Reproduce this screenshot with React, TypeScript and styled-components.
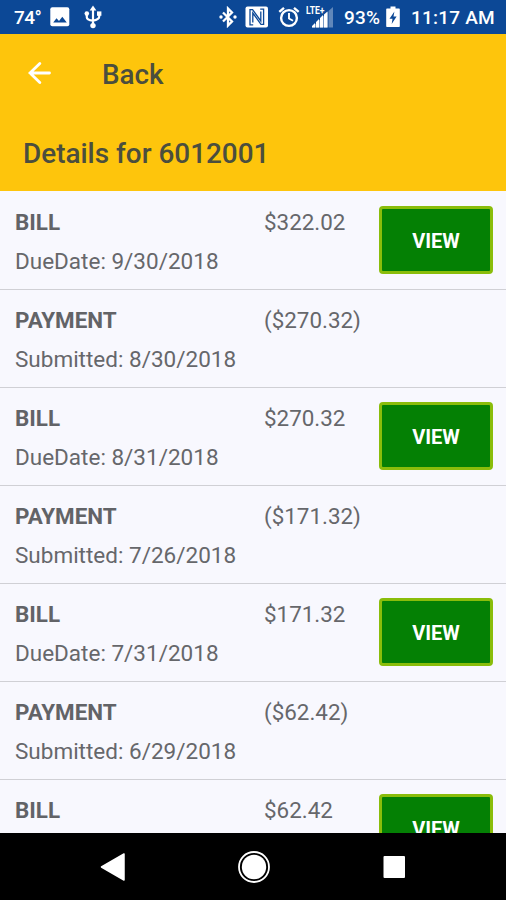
import React from "react";
import styled, { createGlobalStyle } from "styled-components";

const GlobalStyle = createGlobalStyle`
  * { box-sizing: border-box; }
  body { margin: 0; font-family: Roboto, "Noto Sans", sans-serif; }
`;

const Screen = styled.div`
  width: 506px;
  height: 900px;
  display: flex;
  flex-direction: column;
  overflow: hidden;
  background: #f8f8fe;
`;

const StatusBar = styled.div`
  flex: none;
  height: 34px;
  padding: 0 11px 0 14px;
  display: flex;
  align-items: center;
  justify-content: space-between;
  background: #0c4896;
  color: #fff;
`;

const StatusGroup = styled.div`
  display: flex;
  align-items: center;
  height: 34px;
`;

const StatusText = styled.span<{ $w: number; $gap?: number; $spacing?: number }>`
  width: ${(p) => p.$w}px;
  margin-left: ${(p) => p.$gap ?? 0}px;
  padding-top: 2px;
  font-size: 19px;
  line-height: 22px;
  font-weight: 500;
  letter-spacing: ${(p) => p.$spacing ?? 0}px;
  white-space: nowrap;
`;

const StatusIcon = styled.svg<{ $gap: number }>`
  display: block;
  flex: none;
  margin-left: ${(p) => p.$gap}px;
`;

const Header = styled.header`
  flex: none;
  height: 157px;
  background: #fec50c;
  color: #4b4e3e;
`;

const NavRow = styled.div`
  height: 80px;
  padding-left: 28px;
  display: flex;
  align-items: center;
`;

const BackArrow = styled.svg`
  display: block;
  margin-top: -2px;
`;

const BackLabel = styled.span`
  margin-left: 51px;
  padding-top: 2px;
  font-size: 27.8px;
  line-height: 34px;
  font-weight: 500;
`;

const Title = styled.h1`
  margin: 0;
  padding: 23px 0 0 23px;
  font-size: 27.9px;
  line-height: 34px;
  font-weight: 500;
  white-space: nowrap;
`;

const List = styled.main`
  flex: none;
  height: 642px;
  overflow: hidden;
  padding-top: 1px;
`;

const Row = styled.section`
  height: 98px;
  padding: 11px 13px 0 15px;
  display: grid;
  grid-template-columns: 249px 115px 1fr;
  border-bottom: 1px solid #d0d0d5;
  color: #66676b;
`;

const Kind = styled.div`
  font-size: 22.4px;
  line-height: 39px;
  font-weight: 700;
  color: #626367;
`;

const Detail = styled.div`
  font-size: 22.5px;
  line-height: 39px;
  white-space: nowrap;
`;

const Amount = styled.div`
  font-size: 22.4px;
  line-height: 39px;
`;

const ViewButton = styled.button`
  height: 68px;
  margin: 3px 0 0;
  padding: 2px 0 0;
  border: 3px solid #8abd0b;
  border-radius: 4px;
  background: #048004;
  color: #fff;
  font: 700 20px/24px Roboto, sans-serif;
`;

const NavBar = styled.nav`
  flex: none;
  height: 67px;
  background: #000;
  display: flex;
  align-items: center;
  padding-left: 100px;
`;

const NavIcon = styled.svg<{ $gap?: number }>`
  display: block;
  margin-left: ${(p) => p.$gap ?? 0}px;
`;

type Entry = { kind: "BILL" | "PAYMENT"; date?: string; amount: string };

const entries: Entry[] = [
  { kind: "BILL", date: "9/30/2018", amount: "$322.02" },
  { kind: "PAYMENT", date: "8/30/2018", amount: "($270.32)" },
  { kind: "BILL", date: "8/31/2018", amount: "$270.32" },
  { kind: "PAYMENT", date: "7/26/2018", amount: "($171.32)" },
  { kind: "BILL", date: "7/31/2018", amount: "$171.32" },
  { kind: "PAYMENT", date: "6/29/2018", amount: "($62.42)" },
  { kind: "BILL", amount: "$62.42" },
];

const LteLabel = styled.text`
  font: 700 10px Roboto, sans-serif;
  fill: #fff;
`;

export default function App() {
  return (
    <>
      <GlobalStyle />
      <Screen>
        <StatusBar>
          <StatusGroup>
            <StatusText $w={26} $spacing={-0.5}>74°</StatusText>
            <StatusIcon $gap={10} width="20" height="20" viewBox="0 0 20 20">
              <rect x="0.3" y="0.3" width="19" height="19" rx="2" fill="#fff" />
              <path d="M3.2 15.5 6.5 11.2 9 14 12.3 9.8 16.8 15.5Z" fill="#0c4896" />
            </StatusIcon>
            <StatusIcon $gap={14} width="18" height="24" viewBox="0 0 18 24" fill="none" stroke="#fff" strokeWidth="2.2">
              <path d="M9 4v16M2.8 9v3.2q0 2.8 6.2 3.4M15.2 9v2.8q0 2.8-6.2 3.8" />
              <path d="M9 0.6 12.4 5.6H5.6Z" fill="#fff" stroke="none" />
              <circle cx="9" cy="20.6" r="2.7" fill="#fff" stroke="none" />
              <circle cx="2.8" cy="8.6" r="2.3" fill="#fff" stroke="none" />
              <path d="M13 6.4h4.4v4.4H13z" fill="#fff" stroke="none" />
            </StatusIcon>
          </StatusGroup>
          <StatusGroup>
            <StatusIcon $gap={0} width="18" height="22" viewBox="0 0 18 22">
              <path d="M4 6.5 13 15.5 9 19.5V2.5L13 6.5 4 15.5" fill="none" stroke="#fff" strokeWidth="2.3" />
              <circle cx="2" cy="11" r="1.7" fill="#fff" />
              <circle cx="16" cy="11" r="1.7" fill="#fff" />
            </StatusIcon>
            <StatusIcon $gap={8} width="24" height="22" viewBox="0 0 24 22">
              <rect x="0.5" y="0.5" width="22.5" height="21" rx="2" fill="#fff" />
              <path d="M8.2 18.8H5V3.6H7.6L15.8 15V5.5M15.2 3.2H18.6V18.4H16L7.8 7V16.5" fill="none" stroke="#0c4896" strokeWidth="1.3" />
            </StatusIcon>
            <StatusIcon $gap={9} width="22" height="22" viewBox="0 0 22 22" fill="none" stroke="#fff">
              <circle cx="11" cy="12" r="7.9" strokeWidth="2.4" />
              <path d="M11 7v5.5l4 2.3" strokeWidth="1.9" />
              <path d="M1.3 5.8 6 1.9M20.7 5.8 16 1.9" strokeWidth="2.4" />
            </StatusIcon>
            <StatusIcon $gap={6} width="28" height="24" viewBox="0 0 28 24">
              <path d="M22.5 6 27 2v20.5h-4.5Z" fill="#fff" opacity="0.35" />
              <path d="M6 22.5V21L9 18v4.5ZM10 22.5V17L13 14v8.500ZM14 22.500V13L17 10v12.500ZM18 22.500V9.500L21.500 6.500v16Z" fill="#fff" />
              <path d="M6 22.500 21.500 7v15.500Z" fill="#fff" opacity="0.45" />
              <LteLabel x="0" y="9" textLength="18.500" lengthAdjust="spacingAndGlyphs">LTE+</LteLabel>
            </StatusIcon>
            <StatusText $w={42} $gap={10} $spacing={0.2}>93%</StatusText>
            <StatusIcon $gap={0} width="14" height="22" viewBox="0 0 14 22">
              <path d="M4.5 0.5h5v2H13a.8.8 0 0 1 .8.8v16.9a.8.8 0 0 1-.8.8H1a.8.8 0 0 1-.8-.8V3.3a.8.8 0 0 1 .8-.8h3.5Z" fill="#fff" />
              <path d="M8.4 5.5 3.5 12.8h3l-.8 5.2 4.9-7.5H7.5Z" fill="#0c4896" />
            </StatusIcon>
            <StatusText $w={84} $gap={11} $spacing={0.2}>11:17 AM</StatusText>
          </StatusGroup>
        </StatusBar>
        <Header>
          <NavRow>
            <BackArrow width="23" height="24" viewBox="0 0 23 24">
              <path d="M21.5 12H2M11.8 2.500 2 12 11.800 21.500" fill="none" stroke="#fff" strokeWidth="2.800" strokeLinecap="round" />
            </BackArrow>
            <BackLabel>Back</BackLabel>
          </NavRow>
          <Title>Details for 6012001</Title>
        </Header>
        <List>
          {entries.map((e, i) => (
            <Row key={i}>
              <div>
                <Kind>{e.kind}</Kind>
                {e.date && (
                  <Detail>
                    {e.kind === "BILL" ? "DueDate" : "Submitted"}: {e.date}
                  </Detail>
                )}
              </div>
              <Amount>{e.amount}</Amount>
              {e.kind === "BILL" && <ViewButton>VIEW</ViewButton>}
            </Row>
          ))}
        </List>
        <NavBar>
          <NavIcon width="26" height="30" viewBox="0 0 26 30">
            <path d="M1.5 15 24 2v26Z" fill="#fff" stroke="#fff" strokeWidth="1.5" strokeLinejoin="round" />
          </NavIcon>
          <NavIcon $gap={111} width="34" height="34" viewBox="0 0 34 34">
            <circle cx="17" cy="17" r="15" fill="none" stroke="#fff" strokeWidth="1.8" />
            <circle cx="17" cy="17" r="12.2" fill="#fff" />
          </NavIcon>
          <NavIcon $gap={112} width="23" height="24" viewBox="0 0 23 24">
            <rect x="0.5" y="1" width="21.5" height="22" rx="1" fill="#fff" />
          </NavIcon>
        </NavBar>
      </Screen>
    </>
  );
}
